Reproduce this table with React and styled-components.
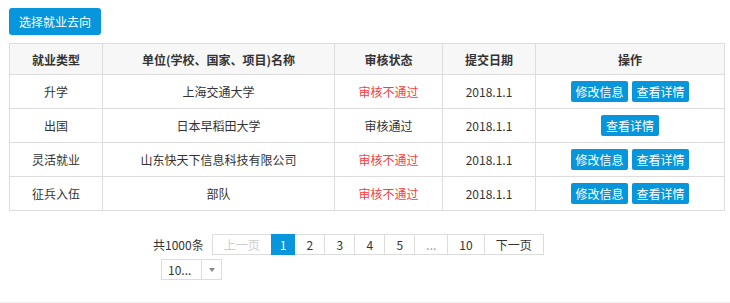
import React from "react";
import styled, { createGlobalStyle } from "styled-components";

const Global = createGlobalStyle`
  html, body { margin: 0; padding: 0; background: #fff; }
  body {
    font-family: "Microsoft YaHei", "Noto Sans CJK SC", "Noto Sans", sans-serif;
    font-size: 12px;
    color: #333;
  }
`;

const Page = styled.div`
  width: 730px;
  min-height: 302px;
  box-sizing: border-box;
  padding: 8px 6px 0 9px;
`;

const PrimaryButton = styled.button`
  height: 27px;
  padding: 0 10px;
  border: 0;
  border-radius: 3px;
  background: #0796dc;
  color: #fff;
  font: inherit;
  font-size: 12px;
  cursor: pointer;
  display: block;
`;

const Table = styled.table`
  margin-top: 8px;
  width: 715px;
  border-collapse: collapse;
  table-layout: fixed;
  border: 1px solid #ddd;
`;

const Th = styled.th`
  height: 30px;
  padding: 0;
  border: 1px solid #ddd;
  background: #f7f7f7;
  font-weight: bold;
  color: #333;
  text-align: center;
`;

const Td = styled.td`
  height: 33px;
  padding: 0;
  border: 1px solid #ddd;
  text-align: center;
  color: ${(p) => (p.$danger ? "#ff3b3b" : "#333")};
`;

const Actions = styled.div`
  display: flex;
  justify-content: center;
  gap: 4px;
`;

const SmallButton = styled.button`
  height: 21px;
  padding: 0 4.5px;
  border: 0;
  border-radius: 2px;
  background: #0796dc;
  color: #fff;
  font: inherit;
  font-size: 12px;
  line-height: 21px;
  cursor: pointer;
`;

const Pager = styled.div`
  margin: 23px 0 0 144px;
`;

const PagerRow = styled.div`
  display: flex;
  align-items: center;
`;

const Total = styled.span`
  margin-right: 9px;
`;

const PageItem = styled.span`
  box-sizing: border-box;
  height: 21px;
  min-width: ${(p) => (p.$active ? "0" : "31px")};
  line-height: 19px;
  text-align: center;
  padding: 0 ${(p) => (p.$active ? "8px" : "11px")};
  border: 1px solid ${(p) => (p.$active ? "#0796dc" : "#ddd")};
  margin-left: -1px;
  position: relative;
  z-index: ${(p) => (p.$active ? 1 : 0)};
  background: ${(p) => (p.$active ? "#0796dc" : "#fff")};
  color: ${(p) => (p.$active ? "#fff" : p.$muted ? "#ccc" : p.$dim ? "#999" : "#333")};
  &:first-of-type { margin-left: 0; }
`;

const SizeSelect = styled.div`
  margin: 4px 0 0 8px;
  width: 61px;
  height: 21px;
  box-sizing: border-box;
  border: 1px solid #ddd;
  display: flex;
  align-items: stretch;
`;

const SizeValue = styled.span`
  flex: 1;
  padding-left: 6px;
  line-height: 19px;
  border-right: 1px solid #ddd;
`;

const SizeArrow = styled.span`
  width: 19px;
  display: flex;
  align-items: center;
  justify-content: center;
  &::after {
    content: "";
    border-left: 3px solid transparent;
    border-right: 3px solid transparent;
    border-top: 4px solid #888;
  }
`;

const Footer = styled.div`
  border-top: 1px solid #eee;
  height: 1px;
`;

const rows = [
  { type: "升学", unit: "上海交通大学", status: "审核不通过", fail: true, date: "2018.1.1", edit: true },
  { type: "出国", unit: "日本早稻田大学", status: "审核通过", fail: false, date: "2018.1.1", edit: false },
  { type: "灵活就业", unit: "山东快天下信息科技有限公司", status: "审核不通过", fail: true, date: "2018.1.1", edit: true },
  { type: "征兵入伍", unit: "部队", status: "审核不通过", fail: true, date: "2018.1.1", edit: true },
];

const widths = [93, 232, 108, 93, 189];

export default function App() {
  return (
    <>
      <Global />
      <Page>
        <PrimaryButton>选择就业去向</PrimaryButton>
        <Table>
          <colgroup>
            {widths.map((w, i) => (
              <col key={i} style={{ width: w }} />
            ))}
          </colgroup>
          <thead>
            <tr>
              <Th>就业类型</Th>
              <Th>单位(学校、国家、项目)名称</Th>
              <Th>审核状态</Th>
              <Th>提交日期</Th>
              <Th>操作</Th>
            </tr>
          </thead>
          <tbody>
            {rows.map((r) => (
              <tr key={r.type}>
                <Td>{r.type}</Td>
                <Td>{r.unit}</Td>
                <Td $danger={r.fail}>{r.status}</Td>
                <Td>{r.date}</Td>
                <Td>
                  <Actions>
                    {r.edit && <SmallButton>修改信息</SmallButton>}
                    <SmallButton>查看详情</SmallButton>
                  </Actions>
                </Td>
              </tr>
            ))}
          </tbody>
        </Table>
        <Pager>
          <PagerRow>
            <Total>共1000条</Total>
            <PageItem $muted>上一页</PageItem>
            <PageItem $active>1</PageItem>
            <PageItem>2</PageItem>
            <PageItem>3</PageItem>
            <PageItem>4</PageItem>
            <PageItem>5</PageItem>
            <PageItem $dim>...</PageItem>
            <PageItem>10</PageItem>
            <PageItem>下一页</PageItem>
          </PagerRow>
          <SizeSelect>
            <SizeValue>10...</SizeValue>
            <SizeArrow />
          </SizeSelect>
        </Pager>
      </Page>
      <Footer />
    </>
  );
}
